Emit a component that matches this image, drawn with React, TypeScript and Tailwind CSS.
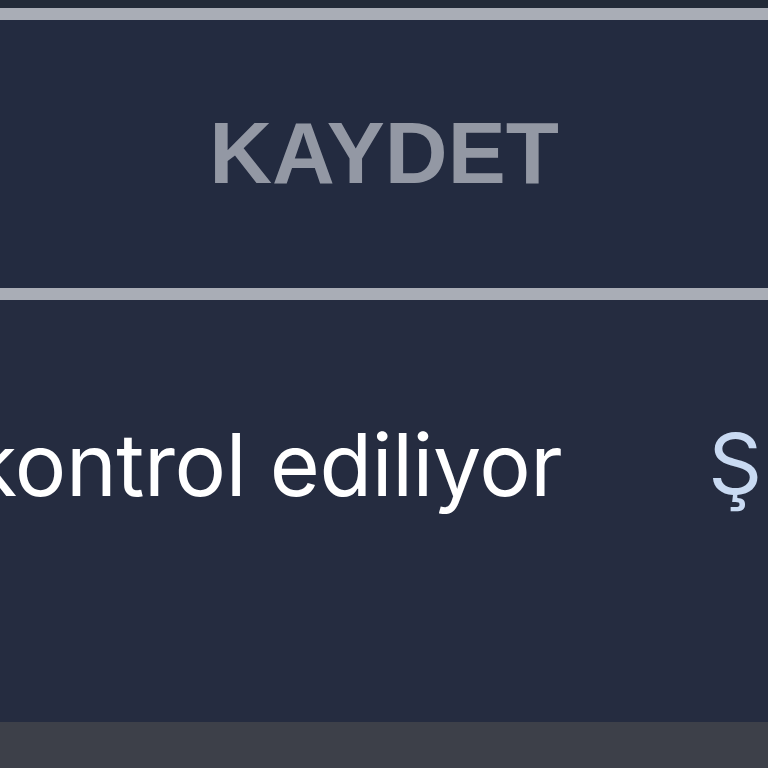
export default function App() {
  return (
    <div className="h-[768px] w-[768px] overflow-hidden flex flex-col bg-[#242b3f]">
      <div className="h-[8px] bg-[#222a38]" />
      <div className="h-[12px] bg-[#a9adb6]" />

      {/* save button */}
      <div className="h-[268px] flex items-center justify-center bg-[#232b40]">
        <span
          className="text-[87px] font-bold leading-none text-[#9398a4] pb-[4px]"
          style={{ fontFamily: '"Liberation Sans", Arial, sans-serif' }}
        >
          KAYDET
        </span>
      </div>

      <div className="h-[12px] bg-[#a9adb6]" />

      {/* status row */}
      <div
        className="h-[422px] flex items-start bg-[#252c40] pt-[122px]"
        style={{ fontFamily: 'Inter, "Noto Sans", sans-serif' }}
      >
        <span className="-ml-[30px] text-[86px] leading-none tracking-[-0.005em] text-white whitespace-nowrap">
          kontrol ediliyor
        </span>
        <span className="ml-[146px] text-[84px] leading-none text-[#c9daf2] whitespace-nowrap">
          Ş
        </span>
      </div>

      <div className="flex-1 bg-[#3d4049]" />
    </div>
  );
}
